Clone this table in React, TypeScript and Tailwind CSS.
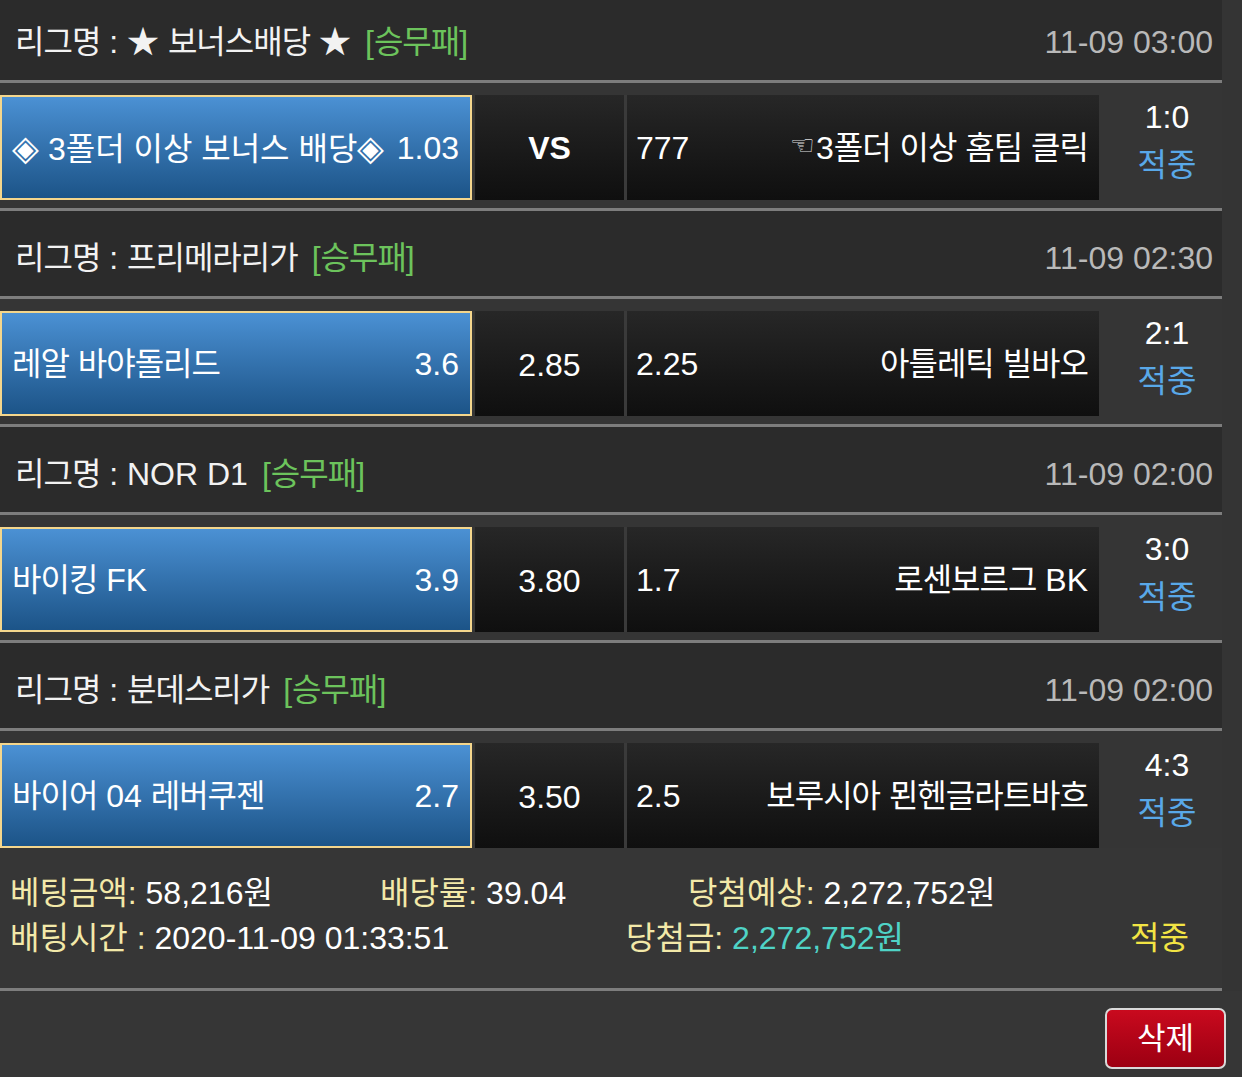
import React from "react";

type Match = {
  league: string;
  time: string;
  home: string;
  homeOdds: string;
  draw: string;
  awayOdds: string;
  away: string;
  score: string;
};

const matches: Match[] = [
  {
    league: "★ 보너스배당 ★",
    time: "11-09 03:00",
    home: "3폴더 이상 보너스 배당",
    homeOdds: "1.03",
    draw: "VS",
    awayOdds: "777",
    away: "3폴더 이상 홈팀 클릭",
    score: "1:0",
  },
  {
    league: "프리메라리가",
    time: "11-09 02:30",
    home: "레알 바야돌리드",
    homeOdds: "3.6",
    draw: "2.85",
    awayOdds: "2.25",
    away: "아틀레틱 빌바오",
    score: "2:1",
  },
  {
    league: "NOR D1",
    time: "11-09 02:00",
    home: "바이킹 FK",
    homeOdds: "3.9",
    draw: "3.80",
    awayOdds: "1.7",
    away: "로센보르그 BK",
    score: "3:0",
  },
  {
    league: "분데스리가",
    time: "11-09 02:00",
    home: "바이어 04 레버쿠젠",
    homeOdds: "2.7",
    draw: "3.50",
    awayOdds: "2.5",
    away: "보루시아 묀헨글라트바흐",
    score: "4:3",
  },
];

function H({ t }: { t: string }) {
  const parts = t.split(/([\uAC00-\uD7A3]+)/);
  return (
    <span>
      {parts.map((p, i) =>
        /[\uAC00-\uD7A3]/.test(p) ? (
          <span key={i} className="tracking-[-1px]">
            {p}
          </span>
        ) : (
          <React.Fragment key={i}>{p}</React.Fragment>
        )
      )}
    </span>
  );
}

function Block({ m, idx, last }: { m: Match; idx: number; last: boolean }) {
  const isBonus = idx === 0;
  return (
    <div>
      <div className="h-[85px] bg-[#2b2b2b] flex items-center justify-between pl-[15px] pr-[9px] pt-[9px] text-[32px] leading-none">
        <div className="text-[#f2f2f2] whitespace-nowrap">
          <H t={`리그명 : ${m.league}`} />
          <span className="text-[#6cc35c] ml-[14px]">
            [<H t="승무패" />]
          </span>
        </div>
        <div className="text-[#b9b9b9] whitespace-nowrap">{m.time}</div>
      </div>
      <div className="h-[3px] bg-[#7d7d7d]" />
      <div className={`${last ? "h-[117px]" : "h-[125px]"} bg-[#353535] flex pt-[12px]`}>
        <div className="w-[472px] h-[105px] border-2 border-[#f4d68c] bg-gradient-to-b from-[#4b91d4] to-[#1c5488] flex items-center justify-between pl-[10px] pr-[11px] text-white text-[32px] leading-none whitespace-nowrap">
          {isBonus ? (
            <span>
              <span className="text-[35px]">◈</span> {m.home}
              <span className="text-[35px]">◈</span>
            </span>
          ) : (
            <H t={m.home} />
          )}
          <span>{m.homeOdds}</span>
        </div>
        <div className="w-[3px]" />
        <div
          className={`w-[149px] h-[105px] bg-gradient-to-b from-[#272727] to-[#0f0f0f] flex items-center justify-center text-white text-[32px] leading-none ${
            isBonus ? "font-bold" : "pt-[2px]"
          }`}
        >
          {m.draw}
        </div>
        <div className="w-[3px] h-[105px] bg-[#3a3a3a]" />
        <div className="w-[472px] h-[105px] bg-gradient-to-b from-[#272727] to-[#0f0f0f] flex items-center justify-between pl-[9px] pr-[11px] text-white text-[32px] leading-none whitespace-nowrap">
          <span>{m.awayOdds}</span>
          <span className="flex items-center">
            {isBonus && (
              <span className="font-['DejaVu_Sans',sans-serif] text-[28px] text-[#dddddd] mr-[1px] -mt-[3px]">
                ☜
              </span>
            )}
            <H t={m.away} />
          </span>
        </div>
        <div className="flex-1 h-[105px] flex flex-col items-center pl-[13px] text-[32px] leading-[32px]">
          <span className="text-white mt-[6px]">{m.score}</span>
          <span className="text-[#59a8e8] mt-[16px]">적중</span>
        </div>
      </div>
      {!last && <div className="h-[3px] bg-[#7d7d7d]" />}
    </div>
  );
}

export default function App() {
  return (
    <div className="w-[1242px] h-[1077px] bg-[#343434] overflow-hidden font-['Liberation_Sans','Noto_Sans_CJK_KR',sans-serif]">
      <div className="w-[1222px] -mt-[5px]">
        {matches.map((m, i) => (
          <Block key={i} m={m} idx={i} last={i === matches.length - 1} />
        ))}
        <div className="h-[140px] bg-[#363636] pl-[10px] pt-[29px] text-[32px] leading-none whitespace-nowrap">
          <div className="flex h-[32px] items-center">
            <div className="w-[370px]">
              <span className="text-[#f3e9a9]">베팅금액: </span>
              <span className="text-white">58,216원</span>
            </div>
            <div className="w-[308px]">
              <span className="text-[#f3e9a9]">배당률: </span>
              <span className="text-white">39.04</span>
            </div>
            <div>
              <span className="text-[#f3e9a9]">당첨예상: </span>
              <span className="text-white">2,272,752원</span>
            </div>
          </div>
          <div className="flex h-[32px] items-center mt-[13px]">
            <div className="w-[616px]">
              <span className="text-[#f3e9a9]">배팅시간 : </span>
              <span className="text-white">2020-11-09 01:33:51</span>
            </div>
            <div className="w-[504px]">
              <span className="text-[#f3e9a9]">당첨금: </span>
              <span className="text-[#4fd3c6]">2,272,752원</span>
            </div>
            <div className="text-[#f2e444]">적중</div>
          </div>
        </div>
        <div className="h-[3px] bg-[#7d7d7d]" />
      </div>
      <div className="bg-[#363636] h-[100px] flex justify-end pr-[16px] pt-[17px]">
        <button className="w-[121px] h-[61px] rounded-[7px] border-2 border-[#d9d9d9] bg-gradient-to-b from-[#c90a1e] to-[#9c0012] text-white text-[31px] leading-none flex items-center justify-center">
          삭제
        </button>
      </div>
    </div>
  );
}
